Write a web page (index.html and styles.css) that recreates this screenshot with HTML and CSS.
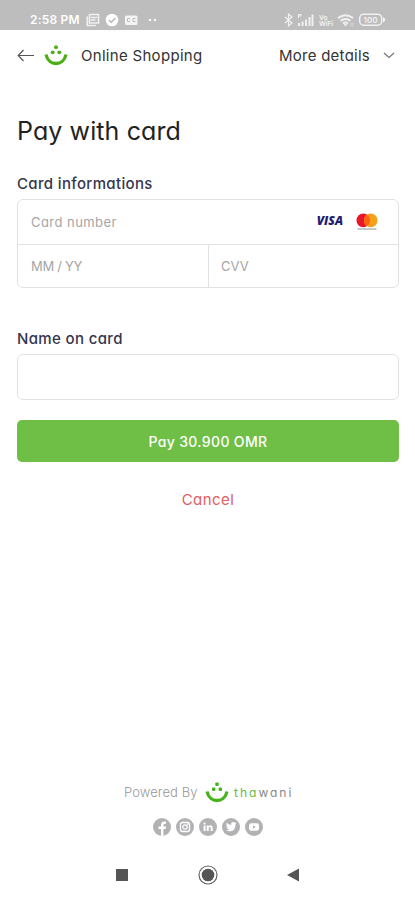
FILE: index.html
```
<!DOCTYPE html>
<html lang="en">
<head>
    <meta charset="UTF-8">
    <meta name="viewport" content="width=device-width, initial-scale=1.0">
    <title>Pay with card</title>
    <link rel="stylesheet" href="styles.css">
</head>
<body>

    <div class="status-bar">
        <span class="status-time">2:58 PM</span>
        <svg class="status-left" width="75" height="14" viewBox="0 0 75 14">
            <path d="M3.500 1.500h9v8.500h-9z M1.300 3.500v9h8.500" fill="none" stroke="#f0f0f0" stroke-width="1.600"/>
            <path d="M5 4.500h6M5 7h4.500" stroke="#f0f0f0" stroke-width="1.400"/>
            <circle cx="26" cy="7" r="6.300" fill="#fff"/>
            <path d="M23 7l2.300 2.300 4-4.300" fill="none" stroke="#bdbdbd" stroke-width="1.700"/>
            <rect x="39" y="2.500" width="12.500" height="9.500" rx="1.500" fill="#f4f4f4"/>
            <path d="M44 5.500h-2.500v3h2.500M49.500 5.500h-2.500v3h2.500" fill="none" stroke="#bdbdbd"/>
            <circle cx="64" cy="7" r="1.300" fill="#f4f4f4"/>
            <circle cx="69" cy="7" r="1.300" fill="#f4f4f4"/>
        </svg>
        <svg class="status-right" width="105" height="16" viewBox="0 0 105 16">
            <path d="M3 5l7 6-3.500 3V2l3.500 3-7 6" fill="none" stroke="#f0f0f0" stroke-width="1.200"/>
            <path d="M17 14v-3M20.500 14v-4.500M24 14V7.500M27.500 14V5M30.500 14V2.500" stroke="#f0f0f0" stroke-width="2"/>
            <path d="M16.500 2v4M16.500 2.500h2.500v1.500h-2" fill="none" stroke="#f0f0f0"/>
            <text x="37" y="7.500" class="tiny">Vo</text>
            <text x="37" y="14" class="tiny">WiFi</text>
            <path d="M56 6q7.500-5.500 15 0M58.500 8.800q5-3.500 10 0M61 11.500q2.500-2 5 0" fill="none" stroke="#f0f0f0" stroke-width="1.900"/>
            <path d="M62 12.200h3l-1.500 2zM69 10.500v4M71 10.500v4" fill="#f0f0f0" stroke="#f0f0f0" stroke-width=".6"/>
            <rect x="77.700" y="2.200" width="22" height="11" rx="4" fill="none" stroke="#f0f0f0" stroke-width="1.500"/>
            <path d="M101 5q4.500 2.700 0 5.500z" fill="#f0f0f0"/>
            <text x="81.500" y="10.800" class="battery">100</text>
        </svg>
    </div>

    <header class="header">
        <svg class="back" width="18" height="14" viewBox="0 0 18 14">
            <path d="M17 7.500H1.500M6.500 2L1.200 7.500 6.500 13" fill="none" stroke="#555" stroke-width="1.200"/>
        </svg>
        <svg class="logo" width="24" height="22" viewBox="0 0 24 22">
            <path d="M2 10.500C4.500 22.500 19.500 22.500 22 10.500" fill="none" stroke="#4bae17" stroke-width="3.300"/>
            <circle cx="12" cy="3.200" r="1.900" fill="#4bae17"/>
            <circle cx="8.700" cy="8.300" r="1.900" fill="#4bae17"/>
            <circle cx="15.300" cy="8.300" r="1.900" fill="#4bae17"/>
        </svg>
        <span class="shop-name">Online Shopping</span>
        <span class="more-details">More details</span>
        <svg class="chevron" width="12" height="8" viewBox="0 0 12 8">
            <path d="M1 2l5 4.500 5-4.500" fill="none" stroke="#777" stroke-width="1.300"/>
        </svg>
    </header>

    <main class="payment">
        <h1 class="title">Pay with card</h1>

        <div class="label card-label">Card informations</div>
        <div class="card-box">
            <div class="card-row">
                <span class="hint card-number">Card number</span>
                <span class="visa">VISA</span>
                <svg class="mastercard" width="22" height="18" viewBox="0 0 22 18">
                    <circle cx="7.300" cy="7.400" r="6.800" fill="#e9152b"/>
                    <circle cx="14.700" cy="7.400" r="6.800" fill="#f9a01b"/>
                    <path d="M11 1.700a6.800 6.800 0 0 1 0 11.400a6.800 6.800 0 0 1 0-11.400" fill="#fa6514"/>
                    <path d="M1.500 16h19" stroke="#a4a4a4" stroke-width="1.200"/>
                </svg>
            </div>
            <div class="card-row split">
                <div class="cell"><span class="hint expiry">MM / YY</span></div>
                <div class="cell"><span class="hint cvv">CVV</span></div>
            </div>
        </div>

        <div class="label name-label">Name on card</div>
        <div class="name-box"></div>

        <div class="pay-button"><span class="pay-text">Pay 30.900 OMR</span></div>
        <div class="cancel"><span class="cancel-text">Cancel</span></div>
    </main>

    <footer class="footer">
        <div class="powered">
            <span class="powered-text">Powered By</span>
            <svg class="footer-logo" width="24" height="22" viewBox="0 0 24 22">
                <path d="M2 10.500C4.500 22.500 19.500 22.500 22 10.500" fill="none" stroke="#45b31c" stroke-width="3.300"/>
                <rect x="10.300" y="1.500" width="3.400" height="3.400" rx="1" fill="#45b31c"/>
                <rect x="7" y="6.500" width="3.400" height="3.400" rx="1" fill="#45b31c"/>
                <rect x="13.600" y="6.500" width="3.400" height="3.400" rx="1" fill="#45b31c"/>
            </svg>
            <span class="brand"><span class="brand-green">tha</span>wani</span>
        </div>
        <div class="social">
            <svg width="18" height="18" viewBox="0 0 18 18">
                <circle cx="9" cy="9" r="9" fill="#b2b2b5"/>
                <path d="M8 18v-7H5.500V8.500H8V7q0-3.500 3.500-3.500h1.500v2.200h-1.200q-1.400 0-1.400 1.500v1.300H13l-.4 2.500h-2.200v7z" fill="#fff"/>
            </svg>
            <svg width="18" height="18" viewBox="0 0 18 18">
                <circle cx="9" cy="9" r="9" fill="#b2b2b5"/>
                <rect x="4.500" y="4.500" width="9" height="9" rx="2" fill="none" stroke="#fff" stroke-width="1.300"/>
                <circle cx="9" cy="9" r="2.200" fill="none" stroke="#fff" stroke-width="1.200"/>
                <circle cx="11.800" cy="6.200" r=".7" fill="#fff"/>
            </svg>
            <svg width="18" height="18" viewBox="0 0 18 18">
                <circle cx="9" cy="9" r="9" fill="#b2b2b5"/>
                <circle cx="5.600" cy="5.600" r="1.100" fill="#fff"/>
                <path d="M4.600 7.400h2v5.600h-2zM7.700 7.400h1.900v.8q.7-1 1.900-1 2.200 0 2.200 2.600V13h-2V10.200q0-1.200-1-1.200t-1 1.200V13h-2z" fill="#fff"/>
            </svg>
            <svg width="18" height="18" viewBox="0 0 18 18">
                <circle cx="9" cy="9" r="9" fill="#b2b2b5"/>
                <path d="M4 12.300q1.700.1 3-.9-1.700-.2-2.100-1.500h1Q4.200 9.300 4.200 7.400l1 .3Q3.800 6.200 4.700 4.700 6.500 6.800 9.200 7q-.4-2.900 2.100-2.900 1 0 1.600.7l1.400-.5-.9 1.200 1.200-.3-1.100 1.200q0 6.800-6 6.800-2 0-3.500-.9z" fill="#fff"/>
            </svg>
            <svg width="18" height="18" viewBox="0 0 18 18">
                <circle cx="9" cy="9" r="9" fill="#b2b2b5"/>
                <rect x="4" y="5.200" width="10" height="7.600" rx="2.300" fill="#fff"/>
                <path d="M8 7.300v3.400l2.800-1.700z" fill="#b2b2b5"/>
            </svg>
        </div>
    </footer>

    <nav class="nav-bar">
        <svg width="12" height="12" viewBox="0 0 12 12"><rect width="12" height="12" fill="#555"/></svg>
        <svg width="20" height="20" viewBox="0 0 20 20">
            <circle cx="10" cy="10" r="9" fill="none" stroke="#666" stroke-width="1.200"/>
            <circle cx="10" cy="10" r="6.300" fill="#555"/>
        </svg>
        <svg width="13" height="14" viewBox="0 0 13 14"><path d="M0 7L12 .5v13z" fill="#555"/></svg>
    </nav>

</body>
</html>
```
FILE: styles.css
```
* {
    box-sizing: border-box;
}

body {
    font-family: Inter, "Liberation Sans", sans-serif;
    font-feature-settings: "cv11";
    background: #fff;
    color: #333;
    margin: 0;
    height: 900px;
    display: flex;
    flex-direction: column;
    overflow: hidden;
}

svg {
    display: block;
    flex: none;
}

span {
    white-space: nowrap;
}

.status-bar {
    display: flex;
    align-items: center;
    height: 30px;
    padding: 9px 28px 0 30px;
    background: #bdbdbd;
}

.status-time {
    width: 56px;
    font-size: 12px;
    font-weight: 600;
    color: #fff;
    letter-spacing: 0.2px;
}

.status-right {
    margin-left: auto;
}

.tiny {
    font-size: 6.500px;
    font-weight: 700;
    fill: #f0f0f0;
}

.battery {
    font-size: 8px;
    font-weight: 600;
    fill: #f0f0f0;
}

.header {
    display: flex;
    align-items: center;
    height: 50px;
    padding: 0 20px 0 17px;
}

.logo {
    margin-left: 9px;
}

.shop-name {
    margin-left: 13px;
    font-size: 15px;
    letter-spacing: 0.3px;
}

.more-details {
    margin-left: auto;
    font-size: 15px;
    letter-spacing: 0.25px;
}

.chevron {
    margin-left: 13px;
}

.payment {
    padding: 34px 16px 0 17px;
}

.title {
    margin: 0;
    font-size: 25px;
    font-weight: 400;
    line-height: 34px;
    color: #222;
    letter-spacing: 0.1px;
}

.label {
    font-size: 15px;
    font-weight: 450;
    line-height: 20px;
    color: #34364d;
    letter-spacing: 0.35px;
}

.card-label {
    margin-top: 26px;
}

.card-box {
    margin-top: 5px;
    height: 89px;
    border: 1px solid #e2e2e2;
    border-radius: 6px;
}

.card-row {
    display: flex;
    align-items: center;
    height: 44px;
    padding: 0 20px 0 13px;
}

.split {
    height: 43px;
    padding: 0;
    border-top: 1px solid #e2e2e2;
}

.cell {
    display: flex;
    align-items: center;
    width: 191px;
    height: 100%;
    padding-left: 13px;
}

.cell + .cell {
    border-left: 1px solid #e2e2e2;
    padding-left: 12px;
}

.hint {
    font-size: 13px;
    color: #a5a5a5;
    letter-spacing: 0.45px;
}

.expiry {
    letter-spacing: -0.3px;
}

.cvv {
    letter-spacing: 0;
}

.visa {
    margin-left: auto;
    font-family: "Open Sans", sans-serif;
    font-size: 12px;
    font-weight: 800;
    font-style: italic;
    line-height: 14px;
    margin-bottom: 2px;
    color: #211c70;
}

.mastercard {
    margin-left: 13px;
}

.name-label {
    margin-top: 41px;
}

.name-box {
    margin-top: 5px;
    height: 46px;
    border: 1px solid #e2e2e2;
    border-radius: 6px;
}

.pay-button {
    display: flex;
    align-items: center;
    justify-content: center;
    margin-top: 20px;
    height: 42px;
    border-radius: 5px;
    background: #6fbe46;
}

.pay-text {
    font-size: 14px;
    font-weight: 500;
    color: #fff;
    letter-spacing: 0.35px;
}

.cancel {
    display: flex;
    justify-content: center;
    margin-top: 28px;
    line-height: 20px;
}

.cancel-text {
    font-size: 15px;
    color: #e35d62;
    letter-spacing: 0.45px;
}

.footer {
    margin-top: auto;
}

.powered {
    display: flex;
    align-items: center;
    height: 24px;
    padding-left: 124px;
}

.powered-text {
    width: 81px;
    font-size: 13px;
    font-weight: 300;
    color: #999;
    letter-spacing: 0.1px;
}

.brand {
    margin-left: 5px;
    font-size: 12px;
    font-weight: 400;
    color: #888;
    letter-spacing: 2px;
}

.brand-green {
    color: #62bd42;
}

.social {
    display: flex;
    justify-content: center;
    gap: 5px;
    margin-top: 14px;
}

.nav-bar {
    display: flex;
    align-items: center;
    justify-content: space-between;
    height: 50px;
    margin-top: 14px;
    padding: 0 115px 0 116px;
}
```
